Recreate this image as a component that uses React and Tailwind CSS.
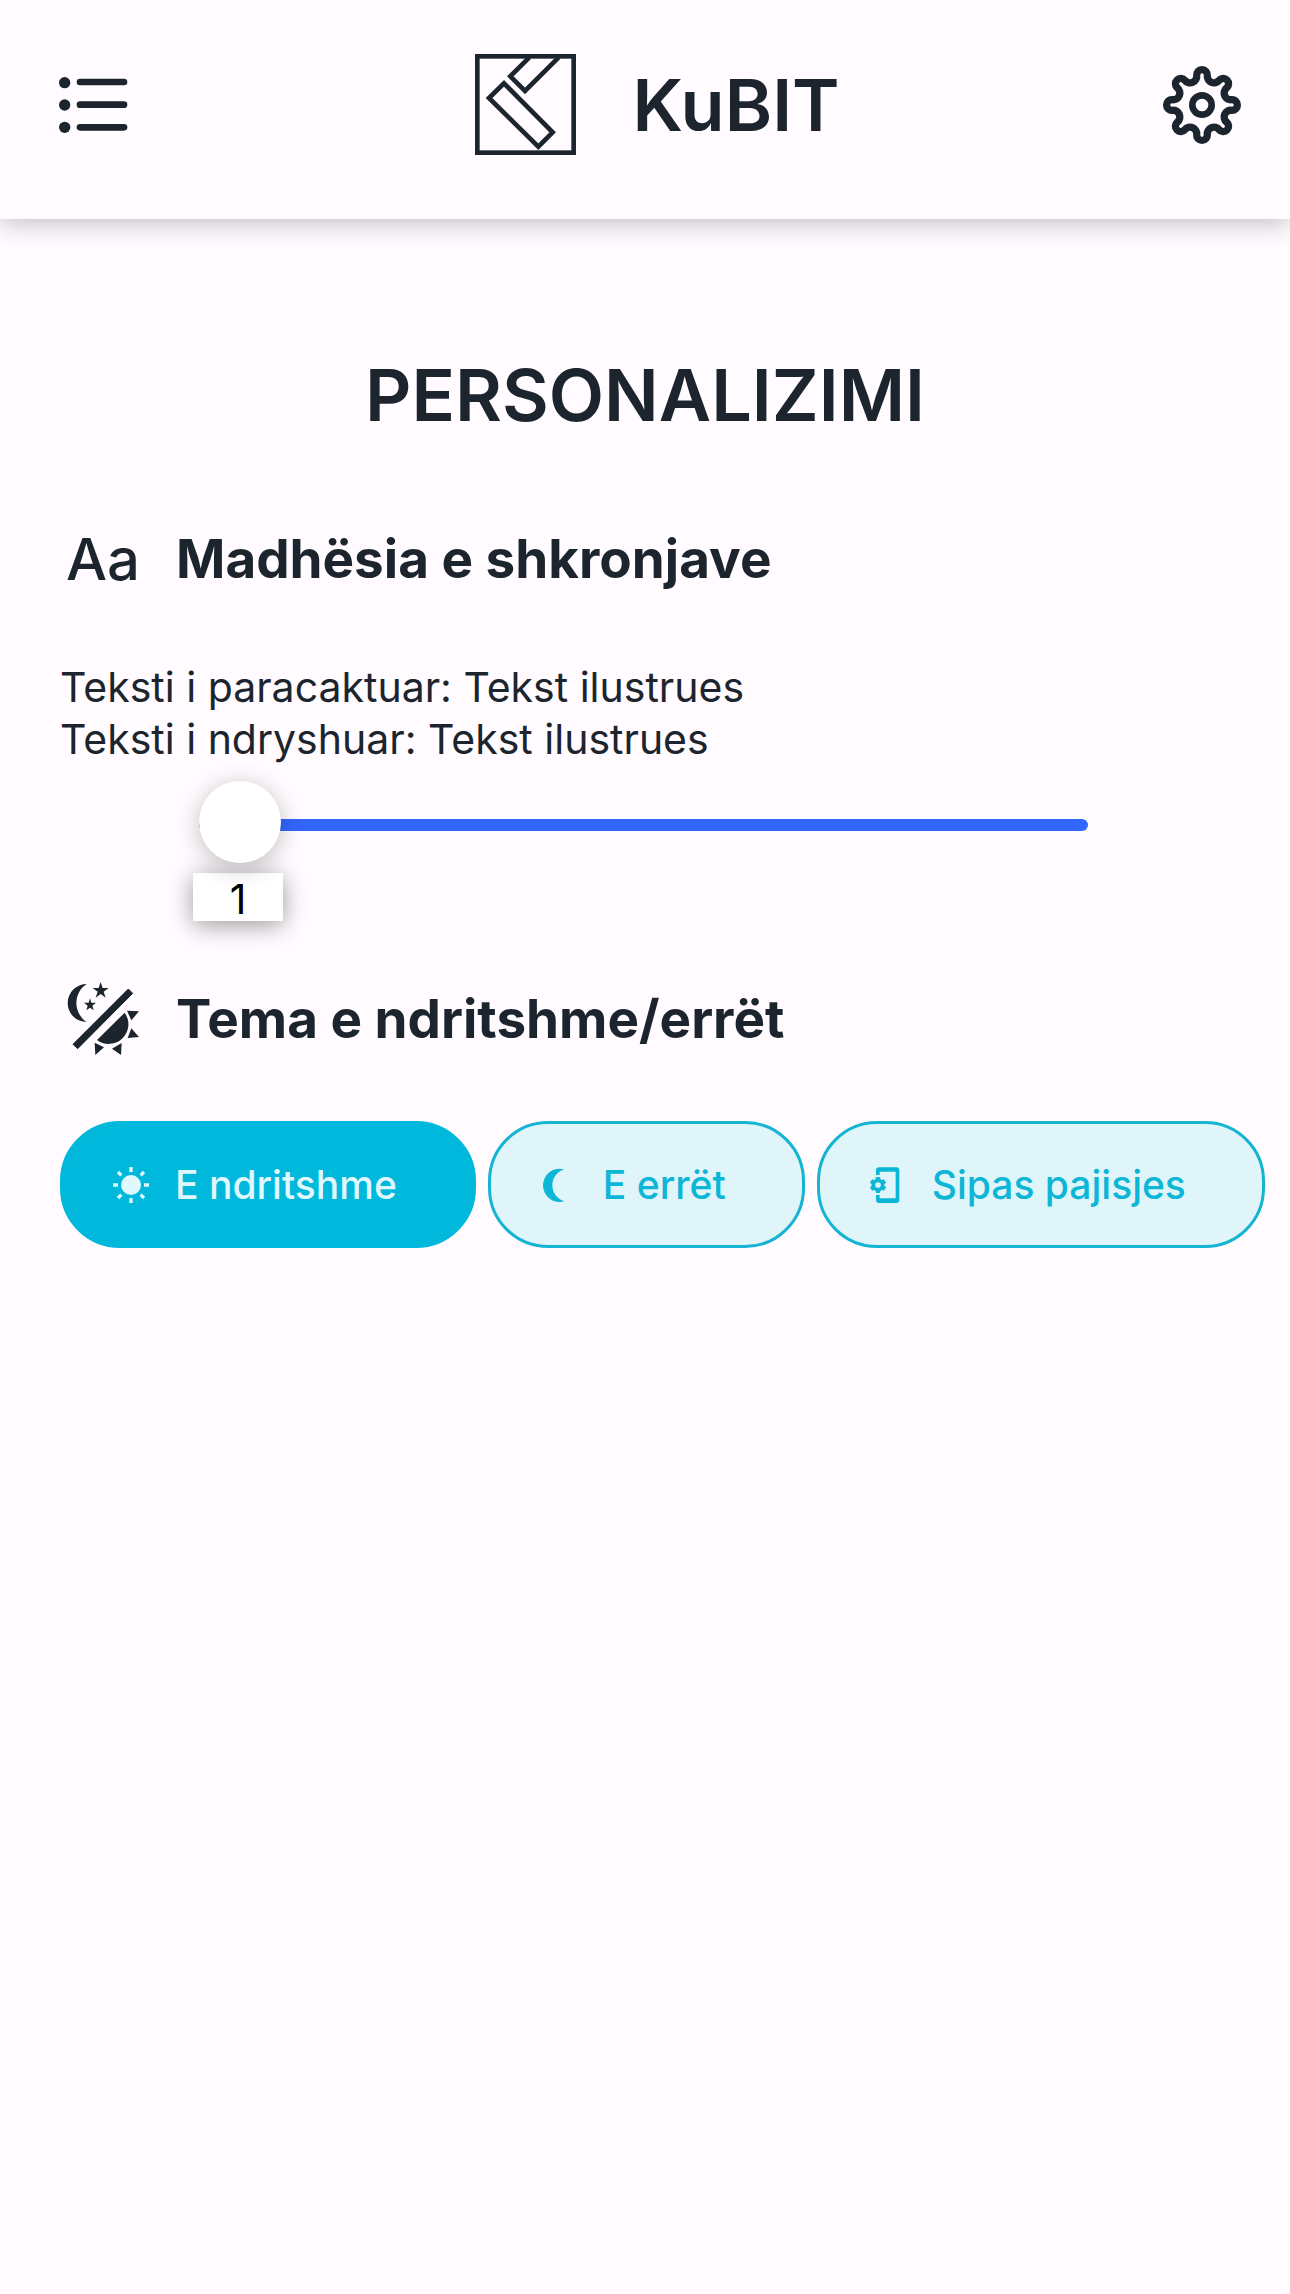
import { useState } from 'react';

const MIN = 1;
const MAX = 2;

// Eight rounded teeth, built from alternating arcs around the origin
const gearPath = () => {
    const lobe = 16;
    const valley = 20;
    const x = 15.9;
    const y = -88.4;
    const points = [];

    for (let i = 0; i < 8; i++) {
        const a = (i * Math.PI) / 4;
        const rotate = (px, py) =>
            `${(px * Math.cos(a) - py * Math.sin(a)).toFixed(1)} ${(px * Math.sin(a) + py * Math.cos(a)).toFixed(1)}`;
        points.push({ left: rotate(-x, y), right: rotate(x, y) });
    }

    return (
        `M${points[0].left}` +
        points
            .map((p, i) => `A${lobe} ${lobe} 0 1 1 ${p.right}A${valley} ${valley} 0 0 0 ${points[(i + 1) % 8].left}`)
            .join('') +
        'Z'
    );
};

const GEAR = gearPath();

function ListIcon() {
    return (
        <svg viewBox="0 0 210 168" className="w-[70px] h-[56px]" fill="currentColor" aria-hidden="true">
            <circle cx="17" cy="17" r="17" />
            <circle cx="17" cy="84" r="17" />
            <circle cx="17" cy="151" r="17" />
            <rect x="53" y="5" width="152" height="20" rx="10" />
            <rect x="53" y="73" width="152" height="20" rx="10" />
            <rect x="53" y="141" width="152" height="20" rx="10" />
        </svg>
    );
}

function Logo() {
    return (
        <svg viewBox="0 0 303 303" className="w-[101px] h-[101px]" fill="none" stroke="currentColor" strokeWidth="14" aria-hidden="true">
            <rect x="7" y="7" width="289" height="289" />
            <path d="M163 10L106 67L150 111L251 10" />
            <path d="M87 88L233 235L190 278L42 132Z" />
        </svg>
    );
}

function GearIcon() {
    return (
        <svg viewBox="-120 -120 240 240" className="w-20 h-20" fill="none" stroke="currentColor" strokeWidth="22" aria-hidden="true">
            <path d={GEAR} />
            <circle r="29" strokeWidth="20" />
        </svg>
    );
}

function ThemeIcon() {
    return (
        <svg viewBox="80 66 219 219" className="w-[73px] h-[73px]" fill="currentColor" aria-hidden="true">
            <path d="M139 72A57 57 0 0 0 139 186A68 68 0 0 1 139 72Z" />
            <path d="M181 66L187 84H205L190 95L196 113L181 102L166 113L172 95L157 84H175Z" />
            <path d="M149 115L153 128H167L156 137L160 151L149 143L138 151L142 137L131 128H145Z" />
            <path d="M264 87L277 100L112 266L98 253Z" strokeWidth="3" stroke="currentColor" />
            <path d="M253 158A59 59 0 0 1 170 240Z" />
            <path d="M260 152L296 154L273 181ZM273 205L296 231L262 234ZM244 249L242 285L215 266ZM163 248L191 262L165 285Z" />
        </svg>
    );
}

function SunIcon() {
    return (
        <svg viewBox="-60 -60 120 120" className="w-10 h-10" fill="currentColor" stroke="currentColor" aria-hidden="true">
            <circle r="30" stroke="none" />
            <path
                strokeWidth="10"
                d="M0 -54V-39M0 39V54M-54 0H-39M39 0H54M-39 -39L-29 -29M39 -39L29 -29M-39 39L-29 29M39 39L29 29"
            />
        </svg>
    );
}

function MoonIcon() {
    return (
        <svg viewBox="0 0 120 120" className="w-10 h-10" fill="currentColor" aria-hidden="true">
            <path d="M76 13A50 50 0 1 0 76 109A50 50 0 0 1 76 13Z" />
        </svg>
    );
}

function DeviceIcon() {
    return (
        <svg viewBox="0 0 120 120" className="w-10 h-10" fill="none" stroke="currentColor" aria-hidden="true">
            <path fill="currentColor" stroke="none" fillRule="evenodd" d="M33 7H85Q94 7 94 16V105Q94 114 85 114H33Q24 114 24 105V90H35V100H83V20H35V30H24V16Q24 7 33 7Z" />
            <circle cx="30" cy="60" r="14" strokeWidth="11" />
            <path strokeWidth="13" d="M30 36V45M30 75V84M9 48L17 53M43 67L51 72M9 72L17 67M43 53L51 48" />
        </svg>
    );
}

const THEMES = [
    { id: 'light', label: 'E ndritshme', icon: <SunIcon /> },
    { id: 'dark', label: 'E errët', icon: <MoonIcon /> },
    { id: 'device', label: 'Sipas pajisjes', icon: <DeviceIcon /> },
];

export default function App() {
    const [size, setSize] = useState(MIN);
    const [theme, setTheme] = useState('light');

    return (
        <div className="min-h-screen bg-[#fffbff] text-[#1c252d] font-['Inter',sans-serif]">
            {/* Header */}
            <header className="flex items-center justify-between h-[219px] pl-[59px] pr-12 pb-[10px] shadow-[0_4px_24px_rgba(0,0,0,0.25)]">
                <button type="button" aria-label="Menu">
                    <ListIcon />
                </button>
                <a href="#" className="flex items-center gap-14 pl-6">
                    <Logo />
                    <span className="text-[72px] leading-[84px] font-semibold">KuBIT</span>
                </a>
                <button type="button" aria-label="Settings">
                    <GearIcon />
                </button>
            </header>

            <main className="pt-[134px] pl-[60px] pr-5">
                <h1 className="pr-10 text-center text-[72px] leading-[84px] font-semibold">PERSONALIZIMI</h1>

                {/* Font size */}
                <section className="pt-[84px]">
                    <div className="flex items-center gap-9">
                        <span className="w-20 pl-[6px] text-[58px] leading-[76px] font-medium" aria-hidden="true">Aa</span>
                        <h2 className="text-[53px] leading-[72px] font-bold">Madhësia e shkronjave</h2>
                    </div>
                    <div className="pt-16 text-[41px] leading-[52px]">
                        <p>Teksti i paracaktuar: Tekst ilustrues</p>
                        <p>
                            Teksti i ndryshuar: <span style={{ fontSize: `${size}em` }}>Tekst ilustrues</span>
                        </p>
                    </div>
                    <div className="pt-4 pl-[139px] pr-[182px]">
                        <input
                            id="font-size"
                            type="range"
                            min={MIN}
                            max={MAX}
                            step="0.1"
                            value={size}
                            onChange={(e) => setSize(Number(e.target.value))}
                            aria-label="Madhësia e shkronjave"
                            className="block w-full h-[88px] appearance-none bg-transparent [&::-webkit-slider-runnable-track]:h-3 [&::-webkit-slider-runnable-track]:rounded-full [&::-webkit-slider-runnable-track]:bg-[#3366ff] [&::-webkit-slider-thumb]:appearance-none [&::-webkit-slider-thumb]:w-[82px] [&::-webkit-slider-thumb]:h-[82px] [&::-webkit-slider-thumb]:-mt-[38px] [&::-webkit-slider-thumb]:rounded-full [&::-webkit-slider-thumb]:bg-white [&::-webkit-slider-thumb]:shadow-[0_4px_24px_rgba(0,0,0,0.25)]"
                        />
                        <div className="-ml-[6px] mr-[76px]">
                            <output
                                htmlFor="font-size"
                                className="block w-[90px] h-12 mt-1 bg-white text-center text-[41px] leading-[52px] text-black shadow-[0_4px_24px_rgba(0,0,0,0.4)]"
                                style={{ marginLeft: `${((size - MIN) / (MAX - MIN)) * 100}%` }}
                            >
                                {size}
                            </output>
                        </div>
                    </div>
                </section>

                {/* Theme */}
                <section className="pt-[61px]">
                    <div className="flex items-center gap-9">
                        <span className="w-20 pl-[7px]">
                            <ThemeIcon />
                        </span>
                        <h2 className="text-[53px] leading-[72px] font-bold">Tema e ndritshme/errët</h2>
                    </div>
                    <div className="flex gap-3 pt-[66px]">
                        {THEMES.map(({ id, label, icon }) => (
                            <button
                                key={id}
                                type="button"
                                aria-pressed={theme === id}
                                onClick={() => setTheme(id)}
                                className={`flex items-center gap-6 h-[127px] pl-12 pr-[76px] rounded-[60px] border-3 text-[39px] leading-[48px] font-medium whitespace-nowrap ${theme === id
                                        ? 'border-[#00b8db] bg-[#00b8db] text-[#dff7fd]'
                                        : 'border-[#14b4d2] bg-[#e0f5fa] text-[#0cb6d6]'
                                    }`}
                            >
                                {icon}
                                {label}
                            </button>
                        ))}
                    </div>
                </section>
            </main>
        </div>
    );
}
